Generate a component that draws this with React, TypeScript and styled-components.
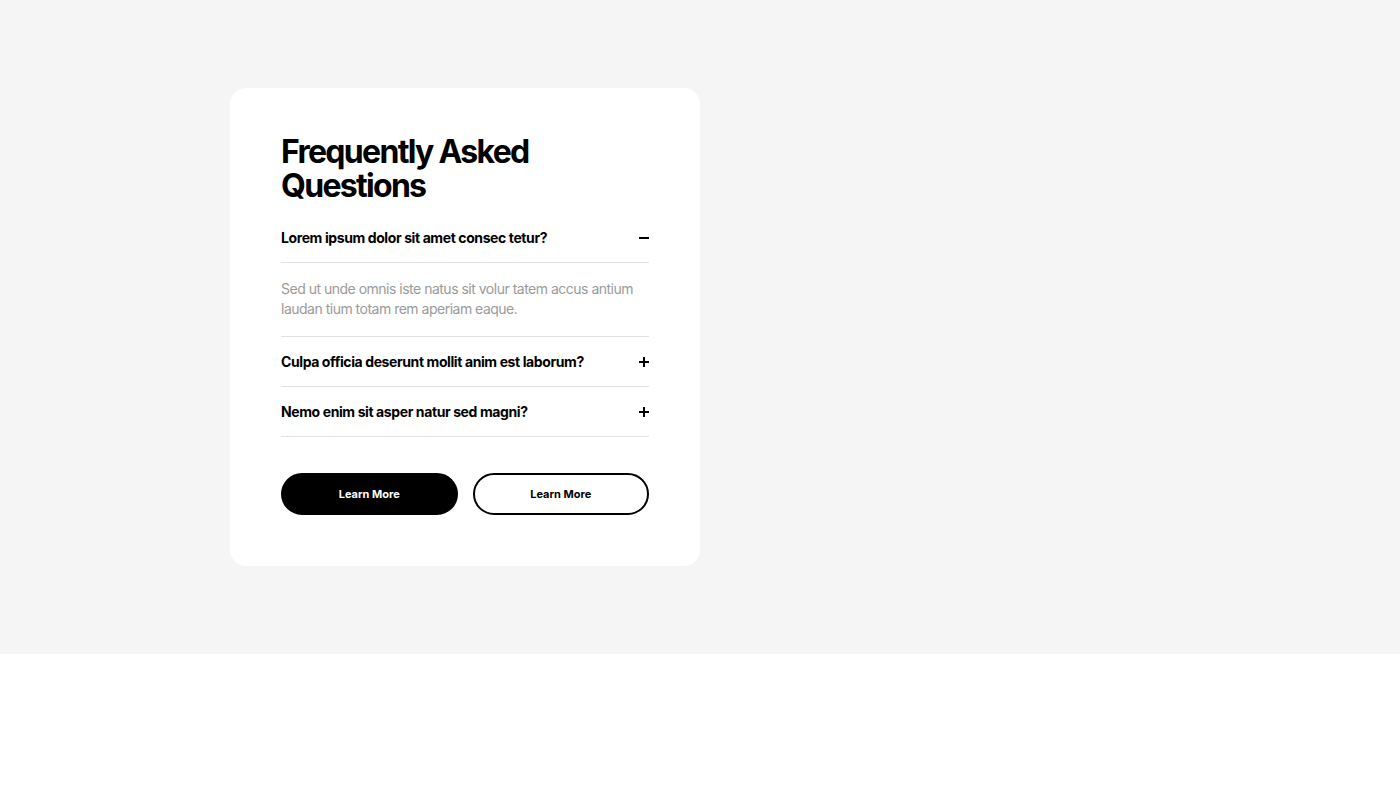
import styled, { createGlobalStyle } from 'styled-components'
import { useState } from 'react'

const GlobalStyle = createGlobalStyle`
  * {
    box-sizing: border-box;
  }

  body {
    margin: 0;
    background: #ffffff;
    font-family: Inter, 'Noto Sans', sans-serif;
    color: #000;
  }
`

const Section = styled.section`
  background: #f5f5f5;
  padding: 88px 0;
`

const Container = styled.div`
  width: 940px;
  margin: 0 auto;
  display: grid;
  grid-template-columns: 470px 1fr;
`

const Card = styled.div`
  background: #ffffff;
  border-radius: 16px;
  padding: 47px 51px 51px 51px;
`

const Title = styled.h2`
  margin: 0 0 10px;
  font-size: 32px;
  line-height: 34px;
  font-weight: 700;
  letter-spacing: -1.7px;
`

const Item = styled.div`
  border-bottom: 1px solid #e2e2e2;
`

const Question = styled.button`
  width: 100%;
  height: 49px;
  padding: 0;
  border: 0;
  background: none;
  display: flex;
  align-items: center;
  justify-content: space-between;
  font-family: inherit;
  font-size: 14px;
  font-weight: 700;
  letter-spacing: -0.4px;
  color: #000;
  text-align: left;
  cursor: pointer;
`

const Answer = styled.p`
  margin: 0;
  border-top: 1px solid #e2e2e2;
  padding: 16px 0 17px;
  font-size: 14px;
  line-height: 20px;
  letter-spacing: -0.5px;
  color: #9a9a9a;
`

const Toggle = styled.span<{ $open: boolean }>`
  position: relative;
  width: 10px;
  height: 10px;
  flex-shrink: 0;

  &::before,
  &::after {
    content: '';
    position: absolute;
    background: #000;
  }

  &::before {
    left: 0;
    top: 4px;
    width: 10px;
    height: 2px;
  }

  &::after {
    left: 4px;
    top: 0;
    width: 2px;
    height: 10px;
    display: ${(p) => (p.$open ? 'none' : 'block')};
  }
`

const Actions = styled.div`
  margin-top: 36px;
  display: grid;
  grid-template-columns: 1fr 1fr;
  gap: 15px;
`

const Button = styled.button<{ $variant: 'solid' | 'outline' }>`
  height: 42px;
  border-radius: 999px;
  border: 2px solid #000;
  background: ${(p) => (p.$variant === 'solid' ? '#000' : '#fff')};
  color: ${(p) => (p.$variant === 'solid' ? '#fff' : '#000')};
  font-family: inherit;
  font-size: 11px;
  font-weight: 700;
  cursor: pointer;
`

const answer =
  'Sed ut unde omnis iste natus sit volur tatem accus antium laudan tium totam rem aperiam eaque.'

const faqs = [
  { q: 'Lorem ipsum dolor sit amet consec tetur?', a: answer },
  { q: 'Culpa officia deserunt mollit anim est laborum?', a: answer },
  { q: 'Nemo enim sit asper natur sed magni?', a: answer },
]

const App = () => {
  const [open, setOpen] = useState(0)

  return (
    <>
      <GlobalStyle />
      <Section>
        <Container>
          <Card>
            <Title>
              Frequently Asked
              <br />
              Questions
            </Title>
            {faqs.map((item, i) => (
              <Item key={item.q}>
                <Question onClick={() => setOpen(open === i ? -1 : i)}>
                  {item.q}
                  <Toggle $open={open === i} />
                </Question>
                {open === i && <Answer>{item.a}</Answer>}
              </Item>
            ))}
            <Actions>
              <Button $variant="solid">Learn More</Button>
              <Button $variant="outline">Learn More</Button>
            </Actions>
          </Card>
        </Container>
      </Section>
    </>
  )
}

export default App
